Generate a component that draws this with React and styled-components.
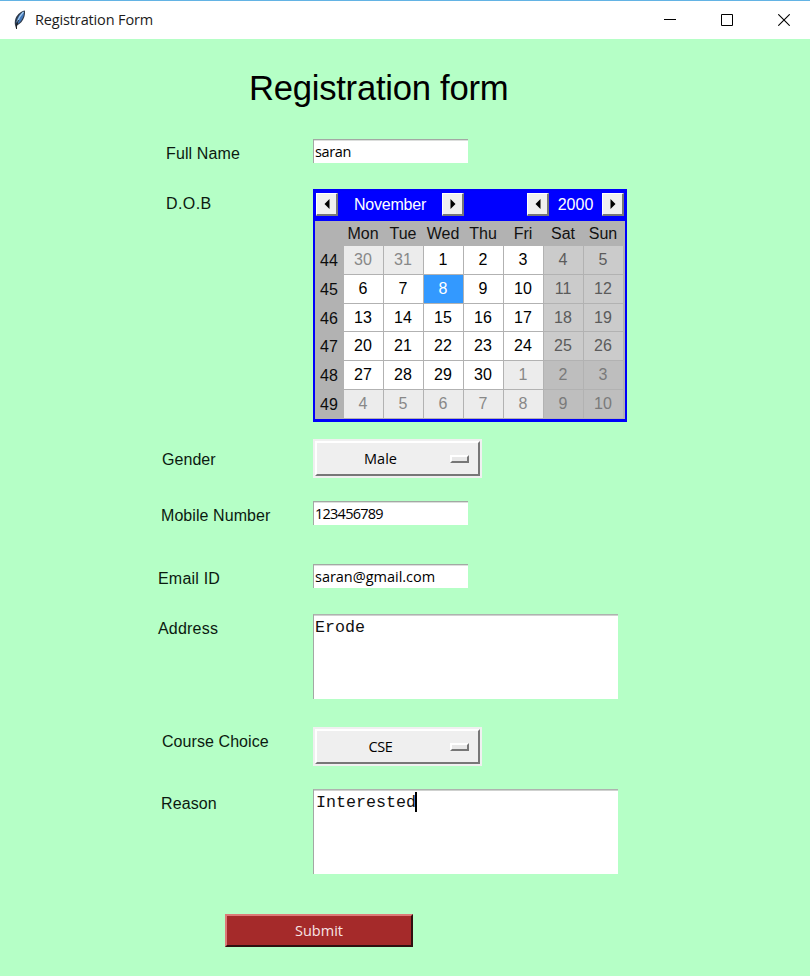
import React from "react";
import styled, { createGlobalStyle } from "styled-components";

const Global = createGlobalStyle`
  * { box-sizing: border-box; }
  body { margin: 0; background: #b5ffc6; overflow: hidden; }
`;

const sans = `"Liberation Sans", Arial, sans-serif`;
const ui = `"Segoe UI", "Open Sans", "Noto Sans", sans-serif`;

const Window = styled.div`
  width: 810px;
  height: 976px;
  background: #b5ffc6;
  font: 16px/20px ${sans};
  color: #0b1a10;
  overflow: hidden;
`;

const TitleBar = styled.header`
  display: flex;
  align-items: center;
  height: 39px;
  border-top: 1px solid #63b3e4;
  background: #fff;
  padding-left: 12px;
`;

const WindowTitle = styled.span`
  flex: 1;
  margin-left: 7px;
  font: 14.5px/20px ${ui};
  letter-spacing: -0.14px;
  color: #1c1c1c;
`;

const Captions = styled.div`
  display: flex;
  margin-right: -2px;
  padding-bottom: 1px;
`;

const Caption = styled.div`
  display: flex;
  width: 57px;
  justify-content: center;
`;

const Heading = styled.h1`
  margin: 0;
  padding: 29px 0 0 249px;
  height: 100px;
  font: 34.67px/40px ${sans};
  letter-spacing: -0.27px;
  color: #000;
  white-space: nowrap;
`;

const Row = styled.div`
  display: grid;
  grid-template-columns: 313px auto;
  justify-content: start;
  align-items: start;
  height: ${(p) => p.$height}px;
`;

const Label = styled.label`
  padding: ${(p) => p.$top}px 0 0 ${(p) => p.$left}px;
  letter-spacing: ${(p) => p.$track || 0}px;
  white-space: nowrap;
`;

const Entry = styled.div`
  width: 155px;
  height: 24px;
  padding: 1px 0 0 1px;
  border-top: 1px solid #a3a8a4;
  border-left: 1px solid #a3a8a4;
  background: #fff;
  box-shadow: inset 0 1px #dcdedc;
  font: 14.5px/21px ${ui};
  letter-spacing: ${(p) => p.$track}px;
  color: #000;
`;

const TextArea = styled.div`
  display: flex;
  align-items: flex-start;
  width: 305px;
  height: 85px;
  padding: 3px 0 0 ${(p) => p.$indent || 2}px;
  border-top: 1px solid #aeb2af;
  border-left: 1px solid #a3a8a4;
  background: #fff;
  box-shadow: inset 0 1px #cfd1cf;
  font: 16.67px/20px "Courier New", "Liberation Mono", monospace;
  color: #111;
`;

const Caret = styled.span`
  width: 2px;
  height: 20px;
  margin: -1px 0 0 -1px;
  background: #000;
`;

const MenuFrame = styled.div`
  width: 169px;
  height: 39px;
  padding: 2px;
  background: #f0f0f0;
`;

const MenuButton = styled.div`
  display: grid;
  grid-template-columns: 127px 20px;
  align-items: center;
  column-gap: 6px;
  height: 35px;
  border: 2px solid;
  border-color: #fff #777 #777 #fff;
  background: #efefef;
  font: 14.5px/20px ${ui};
  letter-spacing: ${(p) => p.$track}px;
  text-align: center;
  color: #000;
`;

const Indicator = styled.i`
  width: 19px;
  height: 8px;
  border: 2px solid;
  border-color: #fff #777 #777 #fff;
  background: #e8e8e8;
`;

const Calendar = styled.div`
  width: 314px;
  height: 233px;
  border: 2px solid #0000fa;
  border-bottom-width: 3px;
  background: #b2b2b2;
`;

const CalendarBar = styled.div`
  display: flex;
  align-items: center;
  justify-content: space-between;
  height: 30px;
  padding: 0 1px 3px 1px;
  background: #00f;
  color: #fff;
`;

const Period = styled.div`
  display: flex;
  align-items: center;
  justify-content: space-between;
  width: ${(p) => p.$width}px;
  letter-spacing: ${(p) => p.$track || 0}px;
`;

const Arrow = styled.button`
  display: grid;
  place-items: center;
  width: 22px;
  height: 23px;
  padding: 0;
  border: 2px solid;
  border-color: #fff #777 #777 #fff;
  border-left-width: 1px;
  border-top-width: 1px;
  background: #efefef;
`;

const Weekdays = styled.div`
  display: grid;
  grid-template-columns: 28px repeat(7, 40px);
  height: 25px;
  line-height: 26px;
  text-align: center;
  color: #111;
`;

const Weeks = styled.div`
  display: grid;
  grid-template-columns: 28px repeat(7, 39px);
  grid-template-rows: repeat(6, 27.8px);
  gap: 1px;
  text-align: center;
  line-height: 28.5px;
`;

const WeekNumber = styled.span`
  padding-top: 1px;
  color: #0c0c0c;
`;

const looks = {
  day: ["#fff", "#000"],
  other: ["#ececec", "#888"],
  weekend: ["#cbcbcb", "#5b5b5b"],
  otherWeekend: ["#bebebe", "#7a7a7a"],
  selected: ["#3399ff", "#fff"],
};

const Day = styled.span`
  padding-right: 1px;
  background: ${(p) => looks[p.$look][0]};
  color: ${(p) => looks[p.$look][1]};
`;

const Submit = styled.button`
  display: block;
  width: 188px;
  height: 33px;
  margin-left: 225px;
  padding: 0;
  border: 2px solid;
  border-color: #dc7a78 #301010 #301010 #dc7a78;
  background: #a52a2a;
  font: 14.5px/20px ${ui};
  letter-spacing: 0;
  color: #f7e4e4;
`;

const Feather = () => (
  <svg width="16" height="20" viewBox="0 0 16 20">
    <path d="M12.800.5c-3 .2-7.500 3.500-9.300 8-.9 2.500-.8 5-.5 6.500l1.200 4 .8-3.500c3.200-1.500 6-4.500 7.300-8.500.9-3 .9-5 .5-6.500z" fill="#303b4a" />
    <path d="M11.800 1.500C8.500 3 5.200 7 4.400 12.500l1.600 1.300C9 11.500 11 8 11.800 5z" fill="#4178bb" />
    <path d="M11.500 2C9 4.500 6.500 8 5.200 12" stroke="#a7cdf0" strokeWidth="1.200" fill="none" />
    <path d="M4.500 19c-.2-3 .5-6 2-9" stroke="#111" strokeWidth=".9" fill="none" />
  </svg>
);

const Triangle = ({ flip }) => (
  <svg width="6" height="10" viewBox="0 0 6 10">
    <path d={flip ? "M.5 0v10L5.500 5z" : "M5.500 0v10L.5 5z"} fill="#000" />
  </svg>
);

const month = [
  [44, 30, 31, 1, 2, 3, 4, 5],
  [45, 6, 7, 8, 9, 10, 11, 12],
  [46, 13, 14, 15, 16, 17, 18, 19],
  [47, 20, 21, 22, 23, 24, 25, 26],
  [48, 27, 28, 29, 30, 1, 2, 3],
  [49, 4, 5, 6, 7, 8, 9, 10],
];

function lookOf(week, col, day) {
  const outside = (week === 0 && day > 20) || (week >= 4 && day < 20);
  if (week === 1 && day === 8) return "selected";
  if (col >= 5) return outside ? "otherWeekend" : "weekend";
  return outside ? "other" : "day";
}

const DatePicker = () => (
  <Calendar>
    <CalendarBar>
      <Period $width={148} $track={-0.2}>
        <Arrow><Triangle /></Arrow>November<Arrow><Triangle flip /></Arrow>
      </Period>
      <Period $width={97}>
        <Arrow><Triangle /></Arrow>2000<Arrow><Triangle flip /></Arrow>
      </Period>
    </CalendarBar>
    <Weekdays>
      <span />
      {["Mon", "Tue", "Wed", "Thu", "Fri", "Sat", "Sun"].map((d) => <span key={d}>{d}</span>)}
    </Weekdays>
    <Weeks>
      {month.map(([number, ...days], w) => (
        <React.Fragment key={number}>
          <WeekNumber>{number}</WeekNumber>
          {days.map((day, c) => <Day key={c} $look={lookOf(w, c, day)}>{day}</Day>)}
        </React.Fragment>
      ))}
    </Weeks>
  </Calendar>
);

const OptionMenu = ({ children, track = 0 }) => (
  <MenuFrame>
    <MenuButton $track={track}><span>{children}</span><Indicator /></MenuButton>
  </MenuFrame>
);

export default function App() {
  return (
    <Window>
      <Global />
      <TitleBar>
        <Feather />
        <WindowTitle>Registration Form</WindowTitle>
        <Captions>
          <Caption><svg width="12" height="12"><path d="M0 5.500h12" stroke="#000" /></svg></Caption>
          <Caption><svg width="12" height="12"><path d="M.5.5h11v11H.5z" stroke="#000" fill="none" /></svg></Caption>
          <Caption><svg width="12" height="12"><path d="M.3.3l11.400 11.400M11.700.3L.3 11.700" stroke="#000" strokeWidth="1.100" /></svg></Caption>
        </Captions>
      </TitleBar>
      <Heading>Registration form</Heading>
      <Row $height={50}>
        <Label $left={166} $top={5} $track={0.12}>Full Name</Label>
        <Entry $track={-0.35}>saran</Entry>
      </Row>
      <Row $height={250}>
        <Label $left={166} $top={5} $track={0.4}>D.O.B</Label>
        <DatePicker />
      </Row>
      <Row $height={62}>
        <Label $left={162} $top={11} $track={0.05}>Gender</Label>
        <OptionMenu track={0}>Male</OptionMenu>
      </Row>
      <Row $height={63}>
        <Label $left={161} $top={5} $track={0.07}>Mobile Number</Label>
        <Entry $track={-0.75}>123456789</Entry>
      </Row>
      <Row $height={50}>
        <Label $left={158} $top={5} $track={0.2}>Email ID</Label>
        <Entry $track={-0.02}>saran@gmail.com</Entry>
      </Row>
      <Row $height={113}>
        <Label $left={158} $top={5} $track={0.2}>Address</Label>
        <TextArea $indent={1}>Erode</TextArea>
      </Row>
      <Row $height={62}>
        <Label $left={162} $top={5} $track={0.07}>Course Choice</Label>
        <OptionMenu track={-0.3}>CSE</OptionMenu>
      </Row>
      <Row $height={125}>
        <Label $left={161} $top={5} $track={0.1}>Reason</Label>
        <TextArea>Interested<Caret /></TextArea>
      </Row>
      <Submit>Submit</Submit>
    </Window>
  );
}
